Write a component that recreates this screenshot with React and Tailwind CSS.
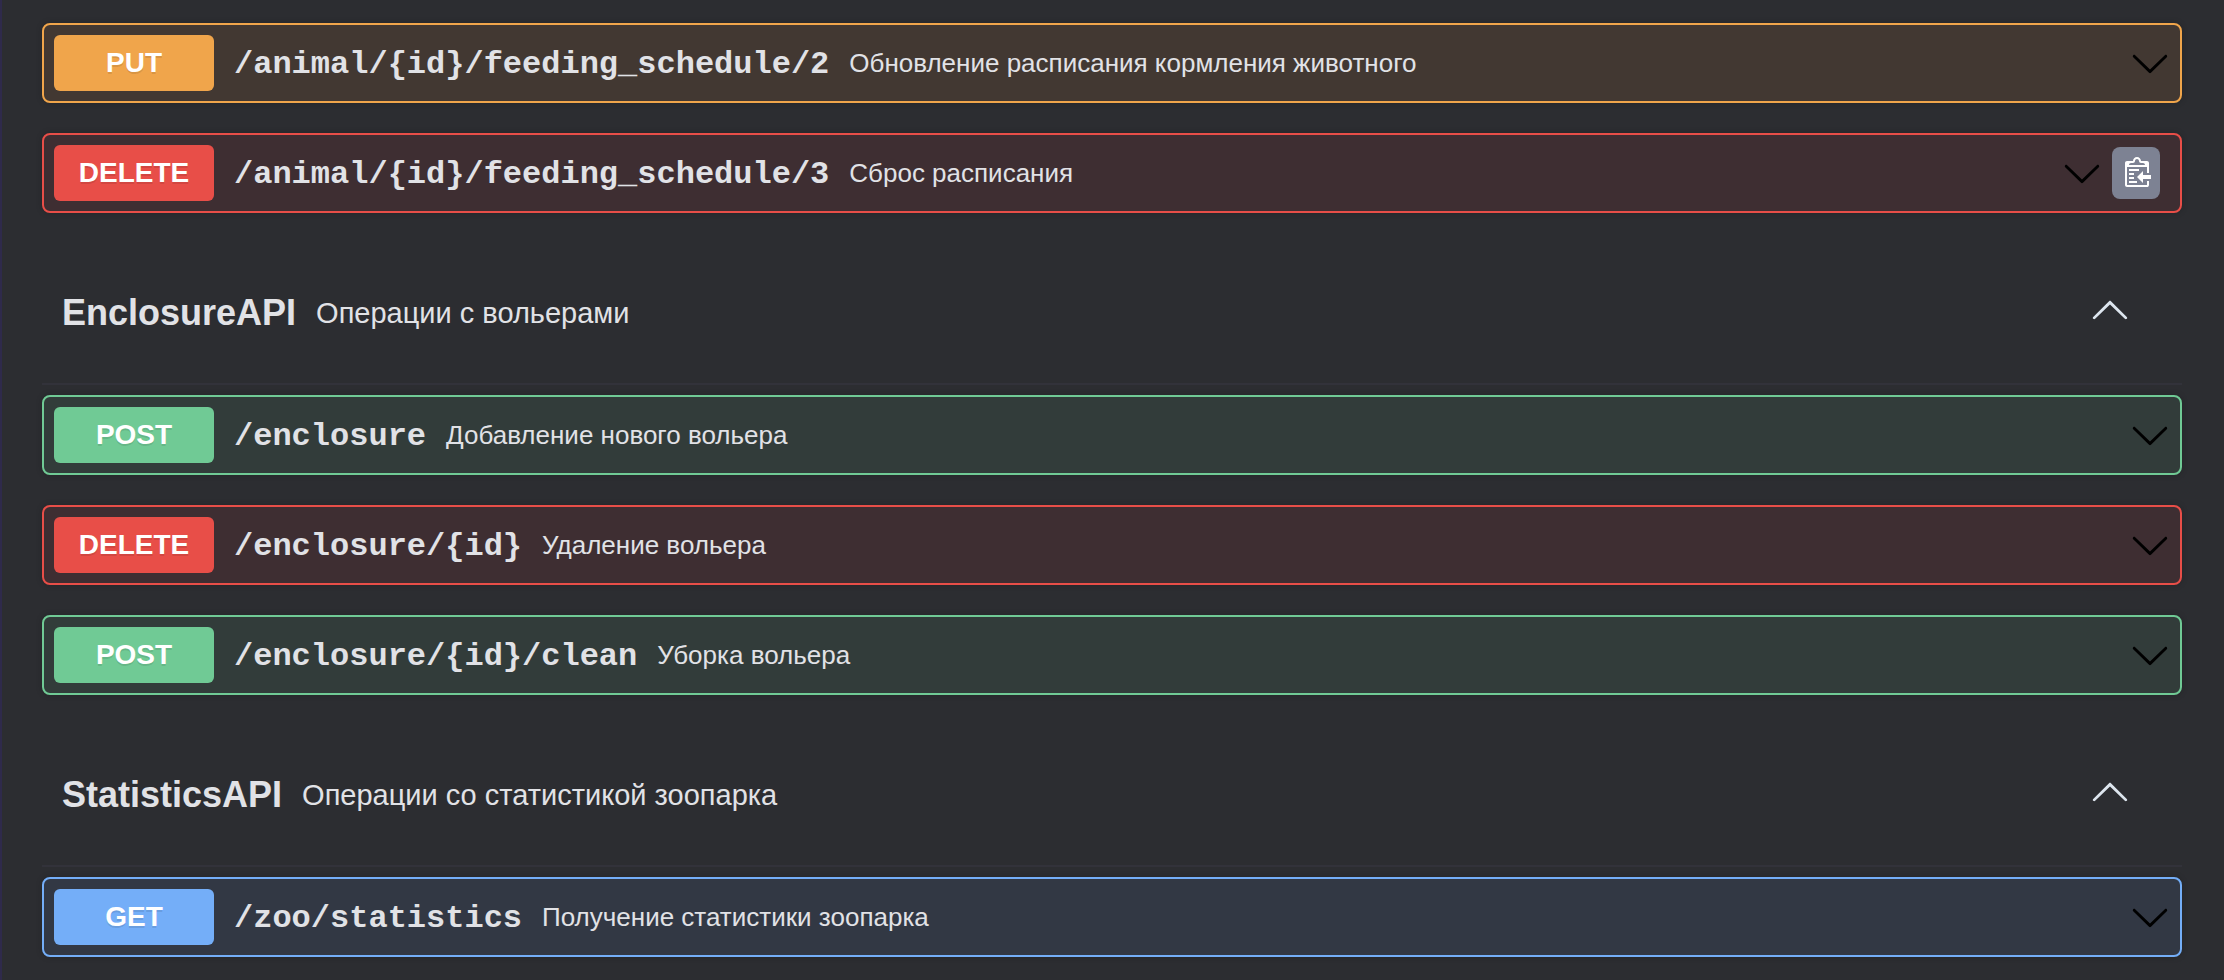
const METHOD_STYLES = {
  GET: { row: 'border-[#74aef8] bg-[#323844]', badge: 'bg-[#74aef8]' },
  POST: { row: 'border-[#70ca95] bg-[#323c3a]', badge: 'bg-[#70ca95]' },
  PUT: { row: 'border-[#f0a54b] bg-[#423832]', badge: 'bg-[#f0a54b]' },
  DELETE: { row: 'border-[#e84e48] bg-[#3e2e32]', badge: 'bg-[#e84e48]' },
};

const FEEDING = [
  { method: 'PUT', path: '/animal/{id}/feeding_schedule/2', summary: 'Обновление расписания кормления животного' },
  { method: 'DELETE', path: '/animal/{id}/feeding_schedule/3', summary: 'Сброс расписания', copy: true },
];

const SECTIONS = [
  {
    name: 'EnclosureAPI',
    description: 'Операции с вольерами',
    operations: [
      { method: 'POST', path: '/enclosure', summary: 'Добавление нового вольера' },
      { method: 'DELETE', path: '/enclosure/{id}', summary: 'Удаление вольера' },
      { method: 'POST', path: '/enclosure/{id}/clean', summary: 'Уборка вольера' },
    ],
  },
  {
    name: 'StatisticsAPI',
    description: 'Операции со статистикой зоопарка',
    operations: [
      { method: 'GET', path: '/zoo/statistics', summary: 'Получение статистики зоопарка' },
    ],
  },
];

function ArrowDown() {
  return (
    <svg className="size-10" viewBox="0 0 20 20" fill="#000" aria-hidden="true">
      <path d="M17.418 6.109c.272-.268.709-.268.979 0s.271.701 0 .969l-7.908 7.83c-.27.268-.707.268-.979 0l-7.908-7.83c-.27-.268-.27-.701 0-.969.271-.268.709-.268.979 0L10 13.25l7.418-7.141z" />
    </svg>
  );
}

function ArrowUp() {
  return (
    <svg className="size-10" viewBox="0 0 20 20" fill="#dde5ee" aria-hidden="true">
      <path d="M17.418 14.908c.272.268.709.268.979 0s.271-.701 0-.969l-7.908-7.83c-.27-.268-.707-.268-.979 0l-7.908 7.83c-.27.268-.27.701 0 .969.271.268.709.268.979 0L10 7.767l7.418 7.141z" />
    </svg>
  );
}

function CopyIcon() {
  return (
    <svg className="h-8 w-[30px]" viewBox="0 0 15 16" fill="#fff" aria-hidden="true">
      <g transform="translate(2 -1)">
        <path
          fillRule="evenodd"
          d="M2 13h4v1H2v-1zm5-6H2v1h5V7zm2 3V8l-3 3 3 3v-2h5v-2H9zM4.5 9H2v1h2.5V9zM2 12h2.5v-1H2v1zm9 1h1v2c-.02.28-.11.52-.3.7-.19.18-.42.28-.7.3H1c-.55 0-1-.45-1-1V4c0-.55.45-1 1-1h3c0-1.11.89-2 2-2 1.11 0 2 .89 2 2h3c.55 0 1 .45 1 1v5h-1V6H1v9h10v-2zM2 5h8c0-.55-.45-1-1-1H8c-.55 0-1-.45-1-1s-.45-1-1-1-1 .45-1 1-.45 1-1 1H3c-.55 0-1 .45-1 1z"
        />
      </g>
    </svg>
  );
}

function Operation({ method, path, summary, copy }) {
  const style = METHOD_STYLES[method];
  return (
    <div className={`flex items-center rounded-lg border-2 p-[10px] shadow-[0_0_6px_rgba(0,0,0,0.19)] ${style.row}`}>
      <button type="button" className="flex min-w-0 flex-1 items-center text-left">
        <span
          className={`w-40 shrink-0 rounded-md py-3 text-center text-[28px] leading-8 font-bold text-white [text-shadow:0_2px_0_rgba(0,0,0,0.1)] ${style.badge}`}
        >
          {method}
        </span>
        <span className="flex items-center gap-5 pl-5">
          <span className="pt-1 font-['Liberation_Mono',monospace] text-[32px] leading-9 font-bold">{path}</span>
          <span className="text-[26px] leading-8">{summary}</span>
        </span>
      </button>
      {copy ? (
        <div className="flex items-center gap-[10px] pr-[10px]">
          <button type="button" aria-label="Развернуть операцию">
            <ArrowDown />
          </button>
          <button
            type="button"
            aria-label="Копировать путь"
            className="flex h-[52px] w-12 items-center justify-center rounded-lg bg-[#7d8293]"
          >
            <CopyIcon />
          </button>
        </div>
      ) : (
        <button type="button" aria-label="Развернуть операцию">
          <ArrowDown />
        </button>
      )}
    </div>
  );
}

function OperationList({ operations }) {
  return (
    <div className="flex flex-col gap-[30px]">
      {operations.map((op) => (
        <Operation key={op.method + op.path} {...op} />
      ))}
    </div>
  );
}

function Section({ name, description, operations }) {
  return (
    <section className="pt-[30px]">
      <div className="mb-[10px] flex items-center border-b-2 border-[#32323a] pt-[42px] pr-[52px] pb-[50px] pl-5">
        <h2 className="flex flex-1 items-center gap-5 pt-2">
          <span className="text-4xl leading-10 font-bold">{name}</span>
          <span className="text-[29px] leading-10">{description}</span>
        </h2>
        <button type="button" aria-label="Свернуть раздел">
          <ArrowUp />
        </button>
      </div>
      <OperationList operations={operations} />
    </section>
  );
}

export default function App() {
  return (
    <main className="min-h-screen border-l-2 border-[#2f2a4b] bg-[#2c2d31] pt-[23px] pr-[42px] pb-[22px] pl-10 font-['Liberation_Sans',Arial,sans-serif] text-[#e1e2e6]">
      <OperationList operations={FEEDING} />
      {SECTIONS.map((section) => (
        <Section key={section.name} {...section} />
      ))}
    </main>
  );
}
